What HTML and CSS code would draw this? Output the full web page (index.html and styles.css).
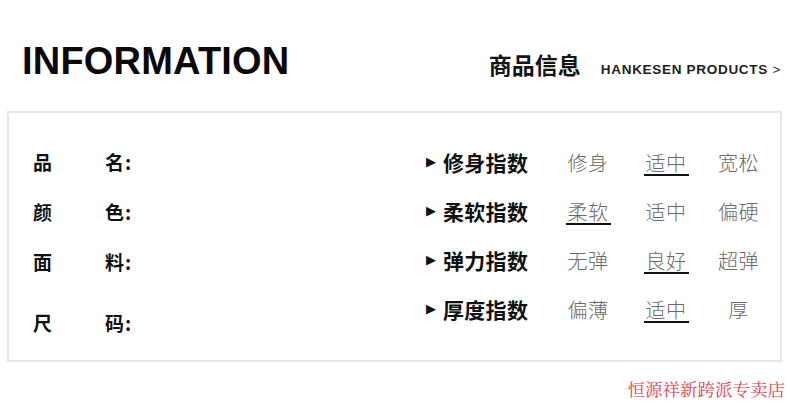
FILE: index.html
```html
<!DOCTYPE html>
<html lang="zh-CN">
<head>
<meta charset="utf-8">
<title>INFORMATION 商品信息</title>
<link rel="stylesheet" href="styles.css">
</head>
<body>
<div class="page">
  <header class="head">
    <h1 class="title">INFORMATION</h1>
    <div class="head-right">
      <span class="cn-title">商品信息</span>
      <span class="en-sub">HANKESEN PRODUCTS <span class="gt">&gt;</span></span>
    </div>
  </header>

  <section class="box">
    <div class="left">
      <div class="lrow"><span class="k1">品</span><span class="k2">名:</span></div>
      <div class="lrow"><span class="k1">颜</span><span class="k2">色:</span></div>
      <div class="lrow"><span class="k1">面</span><span class="k2">料:</span></div>
      <div class="lrow lrow-last"><span class="k1">尺</span><span class="k2">码:</span></div>
    </div>
    <div class="right">
      <div class="rrow">
        <span class="tri">▶</span><span class="idx">修身指数</span>
        <span class="opt"><span class="t">修身</span></span>
        <span class="opt"><span class="t on">适中</span></span>
        <span class="opt opt-last"><span class="t">宽松</span></span>
      </div>
      <div class="rrow">
        <span class="tri">▶</span><span class="idx">柔软指数</span>
        <span class="opt"><span class="t on">柔软</span></span>
        <span class="opt"><span class="t">适中</span></span>
        <span class="opt opt-last"><span class="t">偏硬</span></span>
      </div>
      <div class="rrow">
        <span class="tri">▶</span><span class="idx">弹力指数</span>
        <span class="opt"><span class="t">无弹</span></span>
        <span class="opt"><span class="t on">良好</span></span>
        <span class="opt opt-last"><span class="t">超弹</span></span>
      </div>
      <div class="rrow">
        <span class="tri">▶</span><span class="idx">厚度指数</span>
        <span class="opt"><span class="t">偏薄</span></span>
        <span class="opt"><span class="t on">适中</span></span>
        <span class="opt opt-last"><span class="t">厚</span></span>
      </div>
    </div>
  </section>

  <footer class="shop">恒源祥新跨派专卖店</footer>
</div>
</body>
</html>
```

FILE: styles.css
```css
html, body {
  margin: 0;
  padding: 0;
  background: #ffffff;
}

.page {
  width: 790px;
  height: 403px;
  overflow: hidden;
  font-family: "Noto Sans CJK SC", "Liberation Sans", sans-serif;
  color: #111;
}

.head {
  display: flex;
  align-items: flex-end;
  justify-content: space-between;
  height: 80px;
  padding: 0 9px 0 22px;
  box-sizing: border-box;
  margin-bottom: 31px;
}

.title {
  margin: 0;
  font-family: "Liberation Sans", Arial, sans-serif;
  font-weight: 700;
  font-size: 38px;
  line-height: 38px;
  letter-spacing: 0.2px;
  color: #0a0a0a;
}

.head-right {
  display: flex;
  align-items: baseline;
  gap: 20px;
  padding-bottom: 1px;
}

.cn-title {
  font-family: "Noto Sans CJK SC", sans-serif;
  font-weight: 700;
  font-size: 23px;
  line-height: 30px;
  color: #151515;
}

.en-sub {
  font-family: "Liberation Sans", Arial, sans-serif;
  font-weight: 700;
  font-size: 13.5px;
  letter-spacing: 0.7px;
  color: #222;
}

.gt {
  font-weight: 400;
  color: #333;
}

.box {
  margin-left: 7px;
  width: 775px;
  height: 251px;
  box-sizing: border-box;
  border: 2px solid #e6e6e6;
  display: flex;
}

.left {
  width: 417px;
  padding: 23px 0 0 24px;
  box-sizing: border-box;
}

.lrow {
  display: flex;
  align-items: center;
  height: 50px;
  font-size: 19px;
  font-weight: 700;
  color: #111;
}

.lrow-last {
  margin-top: 11px;
}

.k1 {
  width: 72px;
}

.k2 {
  letter-spacing: 1px;
}

.right {
  padding-top: 24px;
  flex: 1;
}

.rrow {
  display: flex;
  align-items: center;
  height: 49px;
}

.tri {
  width: 17px;
  font-size: 13px;
  color: #111;
  font-family: "DejaVu Sans", sans-serif;
}

.idx {
  width: 106px;
  font-size: 21px;
  font-weight: 700;
  color: #111;
  letter-spacing: 0.3px;
}

.opt {
  width: 78px;
  padding-top: 4px;
  text-align: center;
}

.opt-last {
  width: 67px;
}

.t {
  display: inline-block;
  font-size: 20px;
  font-weight: 300;
  color: #6a6a6a;
  line-height: 22px;
  padding: 0 2px;
  border-bottom: 2px solid transparent;
  letter-spacing: 0.5px;
}

.t.on {
  border-bottom-color: #111;
}

.shop {
  margin-top: 17px;
  text-align: right;
  padding-right: 5px;
  font-family: "Noto Serif CJK SC", "AR PL UMing CN", serif;
  font-size: 17.5px;
  line-height: 20px;
  color: #e2404a;
}
```
